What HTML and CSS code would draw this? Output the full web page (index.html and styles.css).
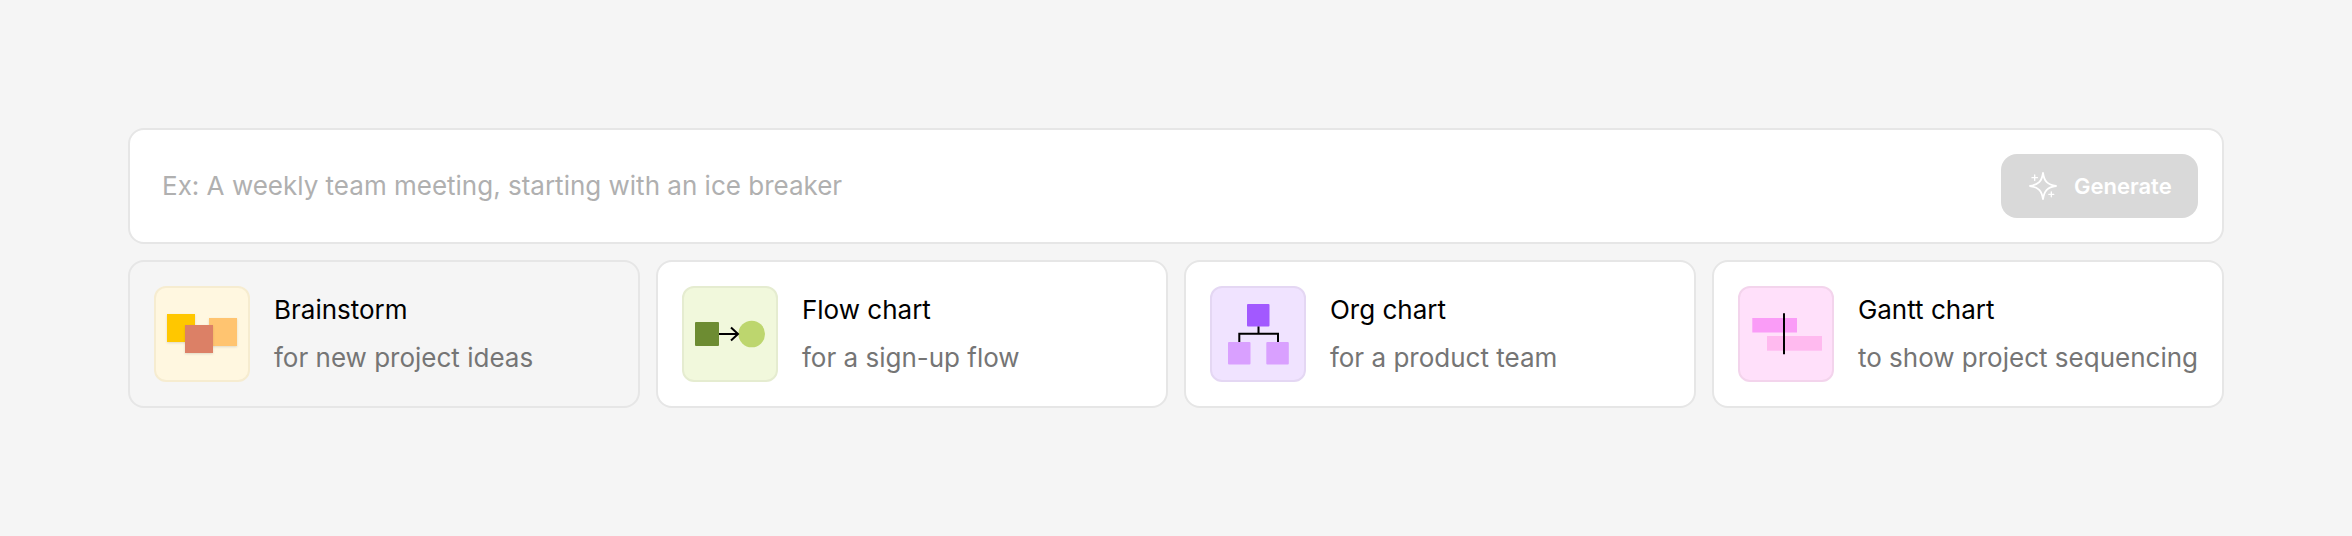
FILE: index.html
```html
<!DOCTYPE html>
<html lang="en">
<head>
<meta charset="utf-8">
<title>Generate</title>
<link rel="stylesheet" href="styles.css">
</head>
<body>
<main class="panel">
  <form class="prompt">
    <input class="prompt-input" type="text" placeholder="Ex: A weekly team meeting, starting with an ice breaker">
    <button class="generate" type="button" disabled>
      <svg class="sparkle" width="32" height="32" viewBox="0 0 32 32" fill="none" stroke="#fff" stroke-width="1.800" stroke-linejoin="round" stroke-linecap="round">
        <path d="M18 3c1.300 8.600 4.400 11.700 13 13c-8.600 1.300-11.700 4.400-13 13c-1.300-8.600-4.400-11.700-13-13c8.600-1.300 11.700-4.400 13-13z"/>
        <path d="M9.700 5v5.400M7 7.700h5.400M26.300 21.800v5M23.800 24.300h5" stroke-width="1.300"/>
      </svg>
      <span>Generate</span>
    </button>
  </form>
  <section class="cards">
    <a class="card card-active">
      <span class="thumb thumb-yellow">
        <svg width="92" height="92" viewBox="0 0 92 92">
          <rect x="11" y="26" width="28" height="28" fill="#ffc700" class="shade"/>
          <rect x="53" y="30" width="28" height="28" fill="#ffc470" class="shade"/>
          <rect x="29" y="37" width="28" height="28" fill="#dc8066" class="shade"/>
        </svg>
      </span>
      <span class="card-text"><span class="card-title">Brainstorm</span><span class="card-sub">for new project ideas</span></span>
    </a>
    <a class="card">
      <span class="thumb thumb-green">
        <svg width="92" height="92" viewBox="0 0 92 92">
          <rect x="11" y="34" width="24" height="24" rx="1" fill="#6d8c32"/>
          <circle cx="67.700" cy="46" r="13.300" fill="#bdd66e"/>
          <path d="M35 46h19M47 39.500l7 6.500l-7 6.500" fill="none" stroke="#000" stroke-width="2"/>
        </svg>
      </span>
      <span class="card-text"><span class="card-title">Flow chart</span><span class="card-sub">for a sign-up flow</span></span>
    </a>
    <a class="card">
      <span class="thumb thumb-purple">
        <svg width="92" height="92" viewBox="0 0 92 92">
          <rect x="35" y="16" width="22.500" height="22.500" rx="1" fill="#a259ff"/>
          <rect x="16" y="54" width="22.500" height="22.500" rx="1" fill="#d9a0ff"/>
          <rect x="54.300" y="54" width="22.500" height="22.500" rx="1" fill="#d9a0ff"/>
          <path d="M46.500 38.500v7M27.300 54v-8.300h38.700V54" fill="none" stroke="#000" stroke-width="2"/>
        </svg>
      </span>
      <span class="card-text"><span class="card-title">Org chart</span><span class="card-sub">for a product team</span></span>
    </a>
    <a class="card">
      <span class="thumb thumb-pink">
        <svg width="92" height="92" viewBox="0 0 92 92">
          <rect x="12.300" y="30" width="44.700" height="14.500" fill="#fa9cf7"/>
          <rect x="27" y="48" width="55" height="14.700" fill="#ffbaef"/>
          <path d="M44 25.300v41" fill="none" stroke="#000" stroke-width="2"/>
        </svg>
      </span>
      <span class="card-text"><span class="card-title">Gantt chart</span><span class="card-sub">to show project sequencing</span></span>
    </a>
  </section>
</main>
</body>
</html>
```
FILE: styles.css
```css
* { box-sizing: border-box; }

html, body { height: 100%; }

body {
  margin: 0;
  background: #f5f5f5;
  font-family: Inter, "Liberation Sans", sans-serif;
  display: flex;
  align-items: center;
  padding: 0 128px;
}

.panel {
  width: 100%;
  display: flex;
  flex-direction: column;
  gap: 16px;
}

.prompt {
  display: flex;
  align-items: center;
  gap: 24px;
  padding: 24px 24px 24px 32px;
  background: #fff;
  border: 2px solid #e6e6e6;
  border-radius: 16px;
}

.prompt-input {
  flex: 1;
  min-width: 0;
  border: 0;
  outline: 0;
  padding: 0;
  background: transparent;
  font: 400 26px/36px Inter, "Liberation Sans", sans-serif;
  color: #000;
}

.prompt-input::placeholder { color: #b0b0b0; opacity: 1; }

.generate {
  display: flex;
  align-items: center;
  gap: 17px;
  height: 64px;
  width: 197px;
  padding: 0 26px 0 24px;
  border: 0;
  border-radius: 16px;
  background: #d9d9d9;
  color: #fff;
  font: 600 22px/32px Inter, "Liberation Sans", sans-serif;
}

.sparkle { flex: none; display: block; }

.cards {
  display: grid;
  grid-template-columns: repeat(4, 1fr);
  gap: 16px;
}

.card {
  display: flex;
  align-items: center;
  gap: 24px;
  padding: 24px;
  background: #fff;
  border: 2px solid #e6e6e6;
  border-radius: 16px;
}

.card-active { background: #f5f5f5; }

.thumb {
  flex: none;
  width: 96px;
  height: 96px;
  border: 2px solid;
  border-radius: 12px;
}

.thumb svg { display: block; }

.thumb-yellow { background: #fff7e0; border-color: #f6ecd0; }
.thumb-green { background: #f1f8dc; border-color: #e5ecd0; }
.thumb-purple { background: #f0e3ff; border-color: #e4d7f3; }
.thumb-pink { background: #ffe0fa; border-color: #f3d4ec; }

.shade { filter: drop-shadow(0 1px 1px rgba(0, 0, 0, .12)); }

.card-text {
  display: flex;
  flex-direction: column;
  gap: 12px;
  white-space: nowrap;
}

.card-title {
  font-size: 26px;
  line-height: 36px;
  color: #000;
}

.card-sub {
  font-size: 26px;
  line-height: 36px;
  color: #757575;
}
```
